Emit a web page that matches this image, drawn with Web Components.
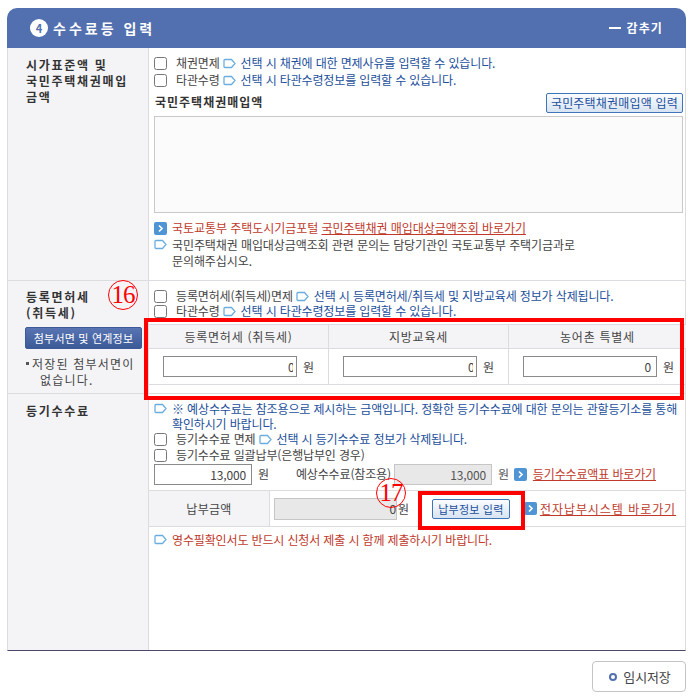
<!DOCTYPE html>
<html lang="ko">
<head>
<meta charset="utf-8">
<title>수수료등 입력</title>
<style>
  body { margin: 0; background: #fff; color: #333; font: 12px/16px "Noto Sans CJK KR", "Noto Sans", sans-serif; letter-spacing: -.14px; }
  a { color: #c0392b; }
  .stack { display: flex; flex-direction: column; }
</style>
</head>
<body>
<script>
// small helper, every element below is the same shape: styles + markup in an open root.
// the markup is written on connect, the parser has not set attributes yet in the constructor
function define (name, html) {
  customElements.define(name, class extends HTMLElement {
    constructor () {
      super()
      this.attachShadow({ mode: 'open' })
    }
    connectedCallback () {
      this.shadowRoot.innerHTML = typeof html === 'function' ? html(this) : html
    }
  })
}

define('tag-icon', `
  <style>:host { display: inline-flex; flex: none; }</style>
  <svg width="13" height="11" viewBox="0 0 13 11"><path d="M2 1.5h6.5L12 5.5 8.5 9.5H2Q1 9.5 1 8.5v-6Q1 1.5 2 1.5z" fill="#fff" stroke="#6aaee0" stroke-width="1.3"/></svg>
`)

define('go-icon', `
  <style>:host { display: inline-flex; flex: none; }</style>
  <svg width="13" height="13" viewBox="0 0 13 13"><rect width="13" height="13" rx="2" fill="#4f94d4"/><path d="M5 3.5 8 6.5 5 9.5" fill="none" stroke="#fff" stroke-width="1.6"/></svg>
`)

define('fee-panel', `
  <style>
    :host { display: block; position: relative; margin: 8px 6px 0 7px; }
    header { height: 40px; background: #5270af; border-radius: 10px 10px 0 0; display: flex; align-items: center; padding: 0 23px; color: #fff; font-weight: 700; }
    .num { width: 18px; height: 18px; border-radius: 50%; background: #fff; color: #5270af; font-size: 11px; line-height: 18px; text-align: center; margin-right: 5px; }
    h2 { margin: 0; font-size: 14px; font-weight: 700; letter-spacing: 3px; flex: 1; }
    .fold { display: flex; align-items: center; gap: 6px; font-size: 12px; letter-spacing: 1.1px; }
    .fold i { width: 12px; height: 2px; background: #fff; }
    main { border-left: 1px solid #dcdce0; border-right: 1px solid #dcdce0; border-bottom: 1px solid #4a4a68; }
  </style>
  <header><span class="num">4</span><h2>수수료등 입력</h2><span class="fold"><i></i>감추기</span></header>
  <main><slot></slot></main>
  <slot name="over"></slot>
`)

define('fee-row', el => `
  <style>
    :host { display: flex; height: ${el.getAttribute('h')}px; border-bottom: 1px solid #dcdce0; box-sizing: border-box; }
    .side { width: 141px; flex: none; box-sizing: border-box; background: #f4f4f7; border-right: 1px solid #dcdce0; padding: ${el.getAttribute('st') || 9}px 6px 0 18px; }
    .side b { display: block; color: #333; line-height: 16px; letter-spacing: 1.7px; }
    .body { flex: 1; min-width: 0; }
  </style>
  <div class="side"><b><slot name="label"></slot></b><slot name="extra"></slot></div>
  <div class="body"><slot></slot></div>
`)

define('check-line', `
  <style>
    :host { display: flex; align-items: center; height: 16px; white-space: nowrap; color: #444; }
    .box { width: 11px; height: 11px; border: 1px solid #767676; border-radius: 2.5px; background: #fff; flex: none; margin-right: 9px; }
    .tip { color: #1c4f9c; display: inline-flex; align-items: center; gap: 5px; margin-left: 3px; }
  </style>
  <span class="box"></span><slot></slot><span class="tip"><slot name="tip"></slot></span>
`)

define('tag-note', `
  <style>
    :host { display: flex; gap: 5px; line-height: 15px; }
    .ic { flex: none; margin-top: 2px; display: inline-flex; align-self: flex-start; }
  </style>
  <span class="ic"><slot name="icon"><tag-icon></tag-icon></slot></span><span><slot></slot></span>
`)

define('blue-button', `
  <style>
    :host { display: inline-block; box-sizing: border-box; border: 1px solid #3f74b8; border-radius: 2px; background: linear-gradient(#fafcff, #d8e4f2); color: #1c4f9c; text-align: center; letter-spacing: .2px; white-space: nowrap; }
  </style>
  <slot></slot>
`)

// "cut" keeps the first two tax fields as in the reference, where the 0 runs off the box
define('won-input', el => `
  <style>
    :host { display: inline-flex; align-items: center; gap: 6px; color: #444; }
    .f { box-sizing: border-box; width: ${el.getAttribute('w')}px; height: ${el.getAttribute('fh') || 21}px; border: 1px solid ${el.hasAttribute('off') ? '#c6c6c6' : '#8a8a8a'}; background: ${el.hasAttribute('off') ? '#e8e8e8' : '#fff'}; text-align: right; padding-right: ${el.getAttribute('pr') || 5}px; line-height: 20px; }
    .cut { display: inline-block; width: 5px; overflow: hidden; vertical-align: top; text-align: left; }
  </style>
  <div class="f">${el.hasAttribute('cut') ? `<span class="cut">${el.getAttribute('v')}</span>` : el.getAttribute('v') || ''}</div><span>원</span>
`)

define('tax-table', `
  <style>
    :host { display: block; height: 61px; border-top: 1px solid #dcdce0; border-bottom: 1px solid #dcdce0; box-sizing: border-box; }
    .g { display: grid; grid-template-columns: 180px 180px 1fr; grid-template-rows: 24px 35px; }
    .h { background: #f4f4f7; border-bottom: 1px solid #dcdce0; border-right: 1px solid #dcdce0; text-align: center; line-height: 24px; color: #444; letter-spacing: .75px; }
    .c { border-right: 1px solid #dcdce0; display: flex; align-items: center; padding-left: 14px; }
    .h:nth-child(3), .c:nth-child(6) { border-right: 0; }
  </style>
  <div class="g">
    <div class="h">등록면허세 (취득세)</div><div class="h">지방교육세</div><div class="h">농어촌 특별세</div>
    <div class="c"><won-input w="134" v="0" cut pr="3"></won-input></div>
    <div class="c"><won-input w="134" v="0" cut pr="3"></won-input></div>
    <div class="c"><won-input w="134" v="0"></won-input></div>
  </div>
`)

define('pay-row', `
  <style>
    :host { display: flex; align-items: center; height: 37px; border-top: 1px solid #dcdce0; border-bottom: 1px solid #dcdce0; box-sizing: border-box; white-space: nowrap; }
    .l { width: 121px; height: 100%; box-sizing: border-box; background: #f4f4f7; border-right: 1px solid #dcdce0; display: flex; align-items: center; justify-content: center; color: #444; letter-spacing: .3px; }
    won-input { margin-left: 4px; gap: 1px; }
    blue-button { width: 78px; height: 20px; line-height: 18px; margin-left: 23px; margin-right: 14px; font-size: 11px; }
    .go { display: flex; align-items: center; gap: 2px; }
    a { color: #c0392b; margin-left: 1px; letter-spacing: .95px; }
  </style>
  <div class="l">납부금액</div>
  <won-input w="123" fh="22" v="0" pr="0" off></won-input>
  <blue-button>납부정보 입력</blue-button>
  <span class="go"><go-icon></go-icon><a href="#">전자납부시스템 바로가기</a></span>
`)

define('temp-save', `
  <style>
    :host { display: flex; justify-content: flex-end; margin: 10px 6px 0 0; }
    div { width: 94px; height: 31px; box-sizing: border-box; border: 1px solid #c4c4c4; border-radius: 4px; display: flex; align-items: center; justify-content: center; gap: 6px; color: #444; font-size: 13px; padding-left: 2px; }
    i { width: 4px; height: 4px; border: 2px solid #5270af; border-radius: 50%; }
  </style>
  <div><i></i>임시저장</div>
`)

define('mark-box', el => `
  <style>
    :host { position: absolute; box-sizing: border-box; border: 4px solid #f00; left: ${el.getAttribute('x')}px; top: ${el.getAttribute('y')}px; width: ${el.getAttribute('w')}px; height: ${el.getAttribute('h')}px; }
  </style>
`)

define('mark-num', el => `
  <style>
    :host { position: absolute; box-sizing: border-box; width: 30px; height: 30px; border: 1.5px solid #f00; border-radius: 50%; left: ${el.getAttribute('x')}px; top: ${el.getAttribute('y')}px; color: #f00; text-align: center; letter-spacing: -1px; font: 25px/27px "Liberation Serif", serif; }
  </style>
  <slot></slot>
`)
</script>

<fee-panel>
  <fee-row h="233">
    <span slot="label">시가표준액 및<br>국민주택채권매입<br>금액</span>
    <div class="stack" style="padding:7px 2px 0 5px">
      <check-line>채권면제<tag-icon slot="tip"></tag-icon><span slot="tip">선택 시 채권에 대한 면제사유를 입력할 수 있습니다.</span></check-line>
      <check-line style="margin-top:1px">타관수령<tag-icon slot="tip"></tag-icon><span slot="tip">선택 시 타관수령정보를 입력할 수 있습니다.</span></check-line>
      <div style="display:flex;justify-content:space-between;align-items:flex-end;margin-top:3px;height:22px">
        <b style="line-height:16px;margin:0 0 3px 1px;letter-spacing:1px">국민주택채권매입액</b>
        <blue-button style="width:137px;height:20px;line-height:18px">국민주택채권매입액 입력</blue-button>
      </div>
      <div style="height:97px;box-sizing:border-box;border:1px solid #c9c9c9;background:#fbfbfb;margin-top:3px"></div>
      <tag-note style="margin-top:7px;color:#c0392b;letter-spacing:-.05px"><go-icon slot="icon"></go-icon>국토교통부 주택도시기금포털 <a href="#">국민주택채권 매입대상금액조회 바로가기</a></tag-note>
      <tag-note style="margin-top:2px;line-height:16px;color:#444;padding-right:100px;letter-spacing:-.09px">국민주택채권 매입대상금액조회 관련 문의는 담당기관인 국토교통부 주택기금과로 문의해주십시오.</tag-note>
    </div>
  </fee-row>

  <fee-row h="113" st="8">
    <span slot="label">등록면허세<br>(취득세)</span>
    <div slot="extra">
      <blue-button style="display:block;margin:6px 0 0 -1px;width:117px;height:22px;line-height:20px;font-size:11px;background:linear-gradient(#5874b2,#3d5a98);border-color:#3d5a98;color:#fff">첨부서면 및 연계정보</blue-button>
      <div style="margin:7px 0 0 -1px;padding-left:7px;text-indent:-7px;line-height:16px;color:#444;letter-spacing:1.2px;white-space:nowrap"><span style="display:inline-block;width:3px;height:3px;background:#555;margin:0 3px 4px 1px;text-indent:0"></span>저장된 첨부서면이<br><span style="margin-left:8px">없습니다.</span></div>
    </div>
    <div class="stack" style="padding-top:7px">
      <div class="stack" style="padding-left:5px">
        <check-line>등록면허세(취득세)면제<tag-icon slot="tip"></tag-icon><span slot="tip">선택 시 등록면허세/취득세 및 지방교육세 정보가 삭제됩니다.</span></check-line>
        <check-line style="margin-top:-1px">타관수령<tag-icon slot="tip"></tag-icon><span slot="tip">선택 시 타관수령정보를 입력할 수 있습니다.</span></check-line>
      </div>
      <tax-table style="margin-top:5px;margin-right:-1px"></tax-table>
    </div>
  </fee-row>

  <fee-row h="256" st="9" style="border-bottom:0">
    <span slot="label">등기수수료</span>
    <div class="stack" style="padding-top:7px">
      <div class="stack" style="padding:0 5px">
        <tag-note style="color:#1c4f9c">※ 예상수수료는 참조용으로 제시하는 금액입니다. 정확한 등기수수료에 대한 문의는 관할등기소를 통해 확인하시기 바랍니다.</tag-note>
        <check-line>등기수수료 면제<tag-icon slot="tip"></tag-icon><span slot="tip">선택 시 등기수수료 정보가 삭제됩니다.</span></check-line>
        <check-line>등기수수료 일괄납부(은행납부인 경우)</check-line>
        <div style="display:flex;align-items:center;white-space:nowrap;height:22px;color:#444">
          <won-input w="98" v="13,000"></won-input>
          <span style="margin-left:27px;margin-right:3px">예상수수료(참조용)</span>
          <won-input w="98" v="13,000" off style="color:#555"></won-input>
          <span style="margin-left:5px;display:flex;align-items:center;gap:6px"><go-icon></go-icon><a href="#">등기수수료액표 바로가기</a></span>
        </div>
      </div>
      <pay-row style="margin-top:5px"></pay-row>
      <tag-note style="color:#c0392b;margin:5px 5px 0">영수필확인서도 반드시 신청서 제출 시 함께 제출하시기 바랍니다.</tag-note>
    </div>
  </fee-row>

  <mark-box slot="over" x="137" y="310" w="540" h="82"></mark-box>
  <mark-box slot="over" x="411" y="483" w="107" h="39"></mark-box>
  <mark-num slot="over" x="101" y="272">16</mark-num>
  <mark-num slot="over" x="369" y="470">17</mark-num>
</fee-panel>
<temp-save></temp-save>
</body>
</html>
